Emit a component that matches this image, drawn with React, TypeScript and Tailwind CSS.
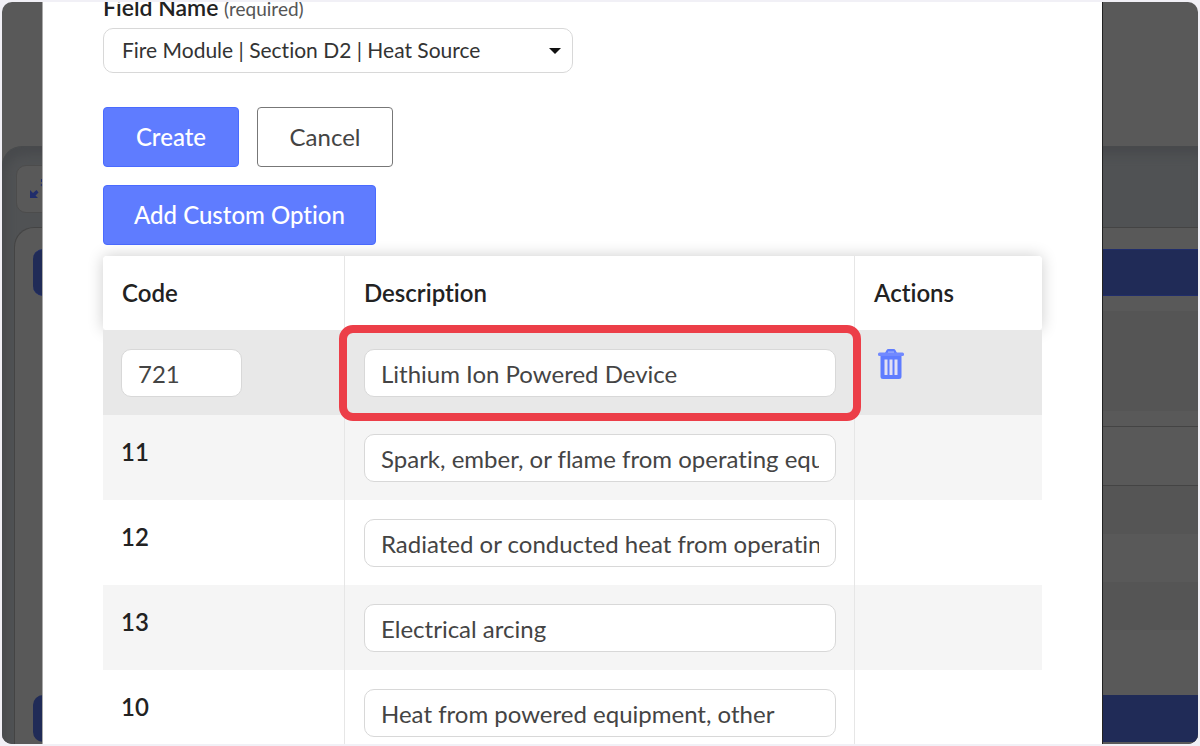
const options = [
  { code: "721", description: "Lithium Ion Powered Device", custom: true },
  { code: "11", description: "Spark, ember, or flame from operating equipment" },
  { code: "12", description: "Radiated or conducted heat from operating equipment" },
  { code: "13", description: "Electrical arcing" },
  { code: "10", description: "Heat from powered equipment, other" },
];

const inputStyle =
  "block h-12 w-full rounded-[10px] border border-[#d8d8d8] bg-white px-4 text-2xl text-[#444]";

const primaryButton =
  "h-15 min-w-34 rounded-[4px] border border-[#4a6bff] bg-[#5f7cff] px-[30px] text-2xl font-medium text-white";

function TrashIcon() {
  return (
    <svg viewBox="0 0 26 30" className="h-[30px] w-[26px]" fill="none">
      <path d="M7 4 8.500 1.200Q9 0 10.500 0h5Q17 0 17.500 1.200L19 4z" fill="#5f7cff" />
      <path d="M10 2.500h6v1.500h-6z" fill="#a9b6fb" />
      <rect x="0" y="3.500" width="26" height="3.500" rx="1.500" fill="#7189ff" />
      <path d="M2.500 7h21v20.500a2.500 2.500 0 0 1-2.500 2.500H5A2.500 2.500 0 0 1 2.500 27.500z" fill="#5f7cff" />
      <path d="M8 10.500V26M13 10.500V26M18 10.500V26" stroke="#e2e0f4" strokeWidth="3" />
    </svg>
  );
}

function CompressIcon() {
  return (
    <svg viewBox="0 0 24 24" className="h-6 w-6">
      <path d="M5 13v8h8l-2.500-2.500 3-3-2-2.500-3.500 3z" fill="#202d6b" />
      <path d="M23 2h-7v3h2.500l-3 3 2 2L23 5z" fill="#202d6b" />
    </svg>
  );
}

function Backdrop() {
  return (
    <div className="absolute inset-0 flex flex-col bg-[#595959]" aria-hidden="true">
      <div className="h-36 shrink-0" />
      <div className="flex-1 rounded-tl-[20px] border-t border-[#484a4c] bg-[#505254] pt-[18px] pl-3 shadow-[inset_4px_8px_10px_#484a4d]">
        <div className="ml-0.5 flex h-12 w-40 items-center rounded-[10px] border border-[#4c4c4c] bg-[#595959] pl-2">
          <CompressIcon />
        </div>
        <div className="mt-[14px] h-full rounded-tl-[20px] border-t border-l border-[#444] bg-[#595959] pt-[21px] pl-[18px]">
          <div className="h-[47px] rounded-l-[10px] border-y border-[#202d6b] bg-[#202b57]" />
          <div className="ml-8">
            <div className="mt-[15px] h-[100px] bg-[#555]" />
            <div className="mt-[15px] h-[60px] border-y border-[#444]" />
            <div className="h-12 bg-[#555]" />
            <div className="mt-12 h-12 bg-[#555]" />
          </div>
          <div className="mt-[65px] h-[47px] rounded-l-[10px] bg-[#202b57]" />
        </div>
      </div>
    </div>
  );
}

export default function App() {
  return (
    <div className="h-screen bg-[#f1f0f6] p-0.5 font-['Lato',sans-serif] text-[#222] [font-variant-ligatures:none]">
      <div className="relative h-full overflow-hidden rounded-[10px]">
        <Backdrop />
        <div className="relative mr-[95px] ml-10 h-full overflow-hidden border-x border-r-[#222] border-l-[#aaa] bg-white px-[60px]">
          <label htmlFor="field-name" className="-mt-2 block h-[34px] text-[23px] leading-[26px] font-semibold">
            Field Name <span className="text-[19px] font-normal text-[#555]">(required)</span>
          </label>
          <div className="relative w-1/2">
            <select
              id="field-name"
              className="block h-[45px] w-full appearance-none rounded-[10px] border border-[#d8d8d8] bg-white pr-10 pb-0.5 pl-[18px] text-[21px] text-[#333]"
            >
              <option>Fire Module | Section D2 | Heat Source</option>
            </select>
            <svg viewBox="0 0 12 6" className="pointer-events-none absolute top-5 right-3 h-1.5 w-3">
              <path d="M0 0h12L6 6z" fill="#111" />
            </svg>
          </div>

          <div className="mt-[34px] flex gap-[18px]">
            <button type="button" className={primaryButton}>
              Create
            </button>
            <button
              type="button"
              className="h-15 min-w-34 rounded-[4px] border border-[#777] bg-white px-[30px] text-2xl text-[#444]"
            >
              Cancel
            </button>
          </div>
          <button type="button" className={"mt-[18px] block " + primaryButton}>
            Add Custom Option
          </button>

          <table className="mt-[11px] w-full table-fixed border-separate border-spacing-0 text-left">
            <colgroup>
              <col className="w-[242px]" />
              <col className="w-[510px]" />
              <col />
            </colgroup>
            <thead>
              <tr className="h-[74px] rounded-[4px] text-2xl shadow-[0_0_16px_#00000033]">
                <th scope="col" className="rounded-l-[4px] border-r border-[#e6e6e6] bg-white pl-[19px] font-semibold">
                  Code
                </th>
                <th scope="col" className="border-r border-[#e6e6e6] bg-white pl-[19px] font-semibold">
                  Description
                </th>
                <th scope="col" className="rounded-r-[4px] bg-white pl-[19px] font-semibold">
                  Actions
                </th>
              </tr>
            </thead>
            <tbody>
              {options.map((option) => (
                <tr
                  key={option.code}
                  className={
                    option.custom ? "h-[85px] bg-[#e8e8e8]" : "h-[85px] bg-white even:bg-[#f5f5f5]"
                  }
                >
                  <th scope="row" className="border-r border-[#e6e6e6] px-[18px] align-top text-2xl font-semibold">
                    {option.custom ? (
                      <input
                        aria-label="Code"
                        defaultValue={option.code}
                        className={inputStyle + " mt-[19px] max-w-[121px] font-normal"}
                      />
                    ) : (
                      <div className="pt-[21px]">{option.code}</div>
                    )}
                  </th>
                  <td className="border-r border-[#e6e6e6] pr-[18px] pl-[19px] align-top">
                    <div className="relative mt-[19px]">
                      <input
                        aria-label={"Description for " + option.code}
                        defaultValue={option.description}
                        className={inputStyle}
                      />
                      {option.custom && (
                        <span className="pointer-events-none absolute -inset-x-[25px] -inset-y-6 rounded-[14px] border-8 border-[#ec3e48]" />
                      )}
                    </div>
                  </td>
                  <td className="px-[23px] align-top">
                    {option.custom && (
                      <button type="button" aria-label="Delete option" className="mt-[19px] block">
                        <TrashIcon />
                      </button>
                    )}
                  </td>
                </tr>
              ))}
            </tbody>
          </table>
        </div>
      </div>
    </div>
  );
}
